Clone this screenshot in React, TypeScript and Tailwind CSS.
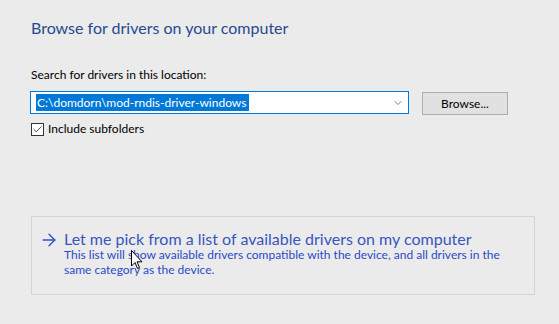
import { ChevronDown, Check, ArrowRight } from 'lucide-react';

function Cursor() {
    return (
        <svg className="absolute left-[131px] top-[250px]" width="13" height="21" viewBox="0 0 13 21">
            <path d="M0.5 0.5 L0.5 16 L4 12.5 L6.5 18.5 L8.5 17.6 L6 11.8 L11 11.8 Z" fill="white" stroke="black" strokeWidth="1" />
        </svg>
    );
}

export default function App() {
    return (
        <div className="relative w-[559px] h-[324px] bg-[#ebebeb] font-['Lato',sans-serif] overflow-hidden">
            <div className="flex flex-col pl-[31px] pt-[17px]">
                <h1 className="text-[16px] leading-[22px] text-[#264a8e]">Browse for drivers on your computer</h1>

                <div className="mt-[28px] text-[12px] leading-[16px] text-black">Search for drivers in this location:</div>

                <div className="mt-[8px] flex items-start">
                    <div className="w-[379px] h-[23px] -ml-px border border-[#0078d7] bg-white flex items-center pl-[5px] pr-[2px]">
                        <span className="bg-[#0078d7] text-white text-[12px] leading-[17px] pl-px pr-[3px]">C:\domdorn\mod-rndis-driver-windows</span>
                        <div className="flex-1" />
                        <ChevronDown className="w-[12px] h-[12px] text-[#555] mr-[2px]" strokeWidth={1.5} />
                    </div>
                    <button className="ml-[13px] mt-px w-[86px] h-[23px] bg-[#e1e1e1] border border-[#adadad] text-[12px] text-black">
                        Browse...
                    </button>
                </div>

                <label className="mt-[6px] flex items-center gap-[4px] text-[12px] leading-[16px] text-black">
                    <span className="w-[13px] h-[13px] border border-[#333] bg-white flex items-center justify-center">
                        <Check className="w-[11px] h-[11px] text-[#333]" strokeWidth={2} />
                    </span>
                    Include subfolders
                </label>

                <div className="mt-[79px] w-[504px] h-[79px] border border-[#d4d4d4] flex pt-[12px] pl-[7px]">
                    <ArrowRight className="w-[20px] h-[20px] text-[#2652cc] mt-[1px]" strokeWidth={1.6} />
                    <div className="ml-[5px] flex flex-col">
                        <div className="text-[16px] leading-[20px] text-[#3956bf]">Let me pick from a list of available drivers on my computer</div>
                        <div className="-mt-px text-[12px] leading-[14.5px] text-[#2a4ac8] w-[450px]">
                            This list will show available drivers compatible with the device, and all drivers in the same category as the device.
                        </div>
                    </div>
                </div>
            </div>
            <Cursor />
        </div>
    );
}
